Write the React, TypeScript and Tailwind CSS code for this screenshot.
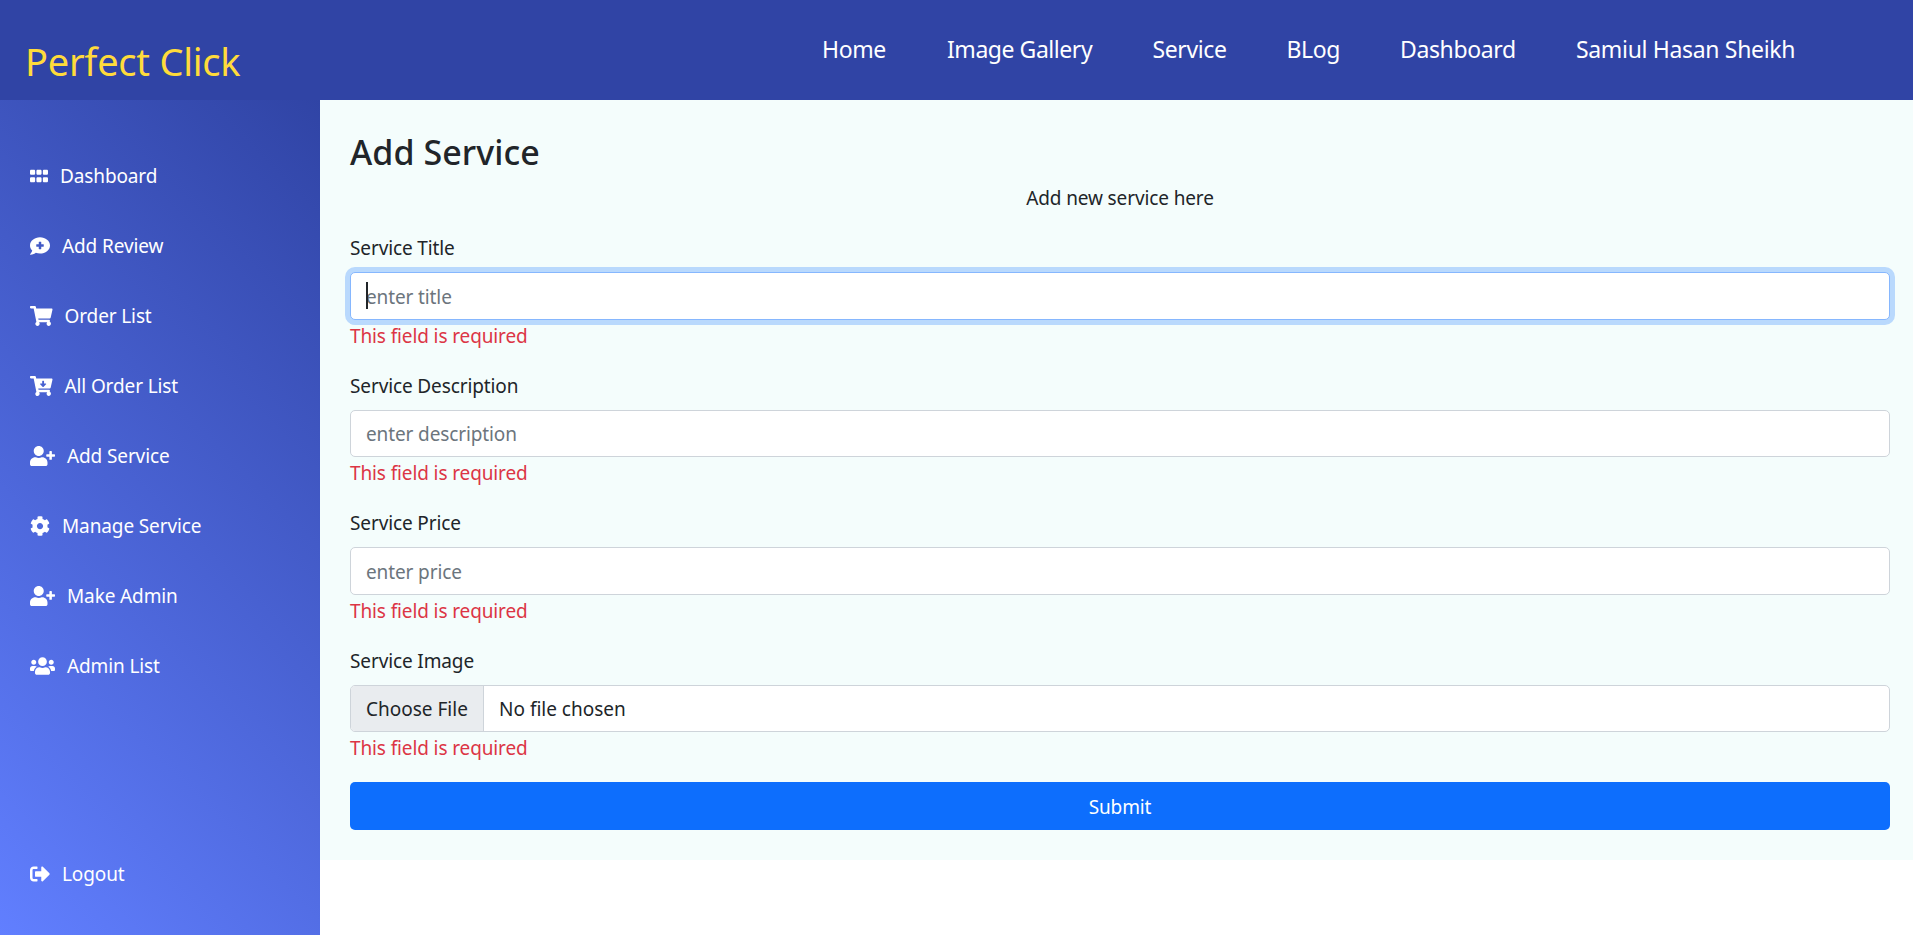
import type { ReactNode } from "react";
import type { IconType } from "react-icons";
import {
  FaCartArrowDown,
  FaCog,
  FaCommentMedical,
  FaGripHorizontal,
  FaShoppingCart,
  FaSignOutAlt,
  FaUserPlus,
  FaUsers,
} from "react-icons/fa";

type MenuEntry = { label: string; icon: IconType; iconClass: string };

const navLinks = [
  { label: "Home", className: "w-[65px]" },
  { label: "Image Gallery", className: "w-[145.5px] tracking-[-0.45px]" },
  { label: "Service", className: "w-[74px]" },
  { label: "BLog", className: "w-[53.5px]" },
  { label: "Dashboard", className: "w-[116px]" },
  { label: "Samiul Hasan Sheikh", className: "w-[221px] tracking-[-0.33px]" },
];

const menu: MenuEntry[] = [
  { label: "Dashboard", icon: FaGripHorizontal, iconClass: "w-[18px]" },
  { label: "Add Review", icon: FaCommentMedical, iconClass: "w-[20px]" },
  { label: "Order List", icon: FaShoppingCart, iconClass: "w-[22.5px]" },
  { label: "All Order List", icon: FaCartArrowDown, iconClass: "w-[22.5px]" },
  { label: "Add Service", icon: FaUserPlus, iconClass: "w-[25px]" },
  { label: "Manage Service", icon: FaCog, iconClass: "w-[20px]" },
  { label: "Make Admin", icon: FaUserPlus, iconClass: "w-[25px]" },
  { label: "Admin List", icon: FaUsers, iconClass: "w-[25px]" },
];

function MenuItem({ label, icon: Icon, iconClass }: MenuEntry) {
  return (
    <a href="#" className="flex h-[70px] items-center gap-3 pl-[30px] text-white">
      <Icon preserveAspectRatio="none" className={`h-5 shrink-0 ${iconClass}`} />
      <span className="whitespace-nowrap">{label}</span>
    </a>
  );
}

function Field({ label, children }: { label: string; children: ReactNode }) {
  return (
    <div className="mb-5">
      <label className="mb-[9px] block pt-px">{label}</label>
      {children}
      <span className="block h-[30px] pt-px text-[#dc3545]">This field is required</span>
    </div>
  );
}

const control =
  "block h-[47.5px] w-full rounded-[5px] border bg-white px-[15px] pt-[2px] text-[#212529] outline-none placeholder:text-[#6c757d]";

export default function App() {
  return (
    <div className="flex h-[935px] flex-col overflow-hidden bg-white font-['Noto_Sans',sans-serif] text-[19px] leading-[30px] tracking-[-0.12px] text-[#212529]">
      <header className="flex h-[100px] shrink-0 justify-between bg-[#3044a5] pl-[25px] pr-[116px]">
        <h1 className="pt-[31px] text-[38px] leading-[60px] tracking-[-0.25px] text-[#ffdb3b]">Perfect Click</h1>
        <nav className="flex gap-[60px] pt-[31px] text-[23px] leading-[36px] tracking-[-0.38px] text-white">
          {navLinks.map((link) => (
            <a key={link.label} href="#" className={`whitespace-nowrap ${link.className}`}>
              {link.label}
            </a>
          ))}
        </nav>
      </header>
      <div className="flex grow items-start">
        <aside className="flex h-[835px] w-[320px] shrink-0 flex-col justify-between bg-[linear-gradient(45deg,#617fff,#3044a5)] pb-[26.5px] pt-[41px]">
          <div>
            {menu.map((item) => (
              <MenuItem key={item.label} {...item} />
            ))}
          </div>
          <MenuItem label="Logout" icon={FaSignOutAlt} iconClass="w-[20px]" />
        </aside>
        <main className="h-[760px] grow bg-[#f4fdfc] pb-[30px] pl-[30px] pr-[23px] pt-[30px]">
          <h2 className="mb-[9px] pt-px text-[34px] font-medium leading-[42px] tracking-[0.05px]">Add Service</h2>
          <p className="mb-[19px] pt-px text-center">Add new service here</p>
          <form>
            <Field label="Service Title">
              <div className="relative">
                <input
                  placeholder="enter title"
                  className={`${control} border-[#86b7fe] shadow-[0_0_0_5px_#b9d9fd]`}
                />
                <span className="absolute left-[16px] top-[10px] h-[27px] w-[2px] bg-[#212529]" />
              </div>
            </Field>
            <Field label="Service Description">
              <input placeholder="enter description" className={`${control} border-[#ced4da]`} />
            </Field>
            <Field label="Service Price">
              <input placeholder="enter price" className={`${control} border-[#ced4da]`} />
            </Field>
            <Field label="Service Image">
              <div className="flex h-[47.5px] w-full overflow-hidden rounded-[5px] border border-[#ced4da] bg-white leading-[47.5px] tracking-[0px]">
                <span className="w-[133px] border-r border-[#ced4da] bg-[#e9ecef] pl-[15px]">Choose File</span>
                <span className="pl-[15px]">No file chosen</span>
              </div>
            </Field>
            <button type="button" className="block h-[47.5px] w-full rounded-[5px] bg-[#0d6efd] pt-[2px] text-white">
              Submit
            </button>
          </form>
        </main>
      </div>
    </div>
  );
}
